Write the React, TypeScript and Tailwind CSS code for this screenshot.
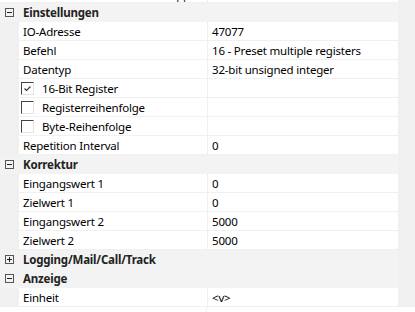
import React from "react";

type Row =
  | { kind: "cat"; label: string; open: boolean }
  | { kind: "prop"; label: string; value: string }
  | { kind: "check"; label: string; checked: boolean };

const rows: Row[] = [
  { kind: "cat", label: "Einstellungen", open: true },
  { kind: "prop", label: "IO-Adresse", value: "47077" },
  { kind: "prop", label: "Befehl", value: "16 - Preset multiple registers" },
  { kind: "prop", label: "Datentyp", value: "32-bit unsigned integer" },
  { kind: "check", label: "16-Bit Register", checked: true },
  { kind: "check", label: "Registerreihenfolge", checked: false },
  { kind: "check", label: "Byte-Reihenfolge", checked: false },
  { kind: "prop", label: "Repetition Interval", value: "0" },
  { kind: "cat", label: "Korrektur", open: true },
  { kind: "prop", label: "Eingangswert 1", value: "0" },
  { kind: "prop", label: "Zielwert 1", value: "0" },
  { kind: "prop", label: "Eingangswert 2", value: "5000" },
  { kind: "prop", label: "Zielwert 2", value: "5000" },
  { kind: "cat", label: "Logging/Mail/Call/Track", open: false },
  { kind: "cat", label: "Anzeige", open: true },
  { kind: "prop", label: "Einheit", value: "<v>" },
];

function Expander({ open }: { open: boolean }) {
  return (
    <svg width="9" height="9" viewBox="0 0 9 9" className="block">
      <rect x="0.5" y="0.5" width="8" height="8" fill="none" stroke="#555" />
      <line x1="2" y1="4.5" x2="7" y2="4.5" stroke="#222" />
      {!open && <line x1="4.5" y1="2" x2="4.5" y2="7" stroke="#222" />}
    </svg>
  );
}

function CheckBox({ checked }: { checked: boolean }) {
  return (
    <span className="w-[13px] h-[13px] shrink-0 border-l border-t border-[#444] border-r border-b border-r-[#e3e3e3] border-b-[#e3e3e3] bg-white flex items-center justify-center">
      {checked && (
        <svg width="9" height="9" viewBox="0 0 9 9" className="block -ml-[1px]">
          <path d="M1.5 4.5 L3.5 6.5 L7.5 2.5" fill="none" stroke="#333" strokeWidth="1.1" />
        </svg>
      )}
    </span>
  );
}

export default function App() {
  return (
    <div className="w-[415px] h-[312px] overflow-hidden bg-[#f0f0f0] text-[11.5px] tracking-[-0.2px] leading-[18px] text-black font-['Segoe_UI','Noto_Sans',sans-serif]">
      <div className="w-[398px]">
        {/* cut-off row above */}
        <div className="flex h-[3px] overflow-hidden border-b border-[#f0f0f0]">
          <div className="w-[19px] shrink-0 bg-white" />
          <div className="w-[189px] shrink-0 bg-white border-r border-[#f0f0f0] overflow-hidden">
            <div className="-mt-[14px] pl-[150px] text-[#222]">App</div>
          </div>
          <div className="flex-1 bg-white" />
        </div>

        {rows.map((r, i) => {
          if (r.kind === "cat") {
            return (
              <div key={i} className="flex h-[19px] bg-[#f3f3f3] border-b border-[#f3f3f3]">
                <div className="w-[19px] shrink-0 flex items-center justify-center pr-[1px]">
                  <Expander open={r.open} />
                </div>
                <div className="pl-[4px] pt-[1px] font-bold text-[#222]">{r.label}</div>
              </div>
            );
          }
          return (
            <div key={i} className="flex h-[19px] border-b border-[#f0f0f0]">
              <div className="w-[19px] shrink-0 bg-[#f0f0f0]" />
              <div className="w-[189px] shrink-0 bg-white border-r border-[#f0f0f0] flex items-center whitespace-nowrap overflow-hidden">
                {r.kind === "check" ? (
                  <div className="flex items-center pl-[2px] gap-[8px]">
                    <CheckBox checked={r.checked} />
                    <span className="pt-[1px]">{r.label}</span>
                  </div>
                ) : (
                  <span className="pl-[4px] pt-[1px]">{r.label}</span>
                )}
              </div>
              <div className="flex-1 bg-white pl-[4px] pt-[1px] flex items-center whitespace-nowrap overflow-hidden">
                {r.kind === "prop" ? r.value : ""}
              </div>
            </div>
          );
        })}
      </div>

      {/* next row, cut off at the bottom */}
      <div className="flex h-[6px] bg-white">
        <div className="w-[207px] shrink-0 border-r border-[#f0f0f0]" />
        <div className="flex-1" />
      </div>
    </div>
  );
}
